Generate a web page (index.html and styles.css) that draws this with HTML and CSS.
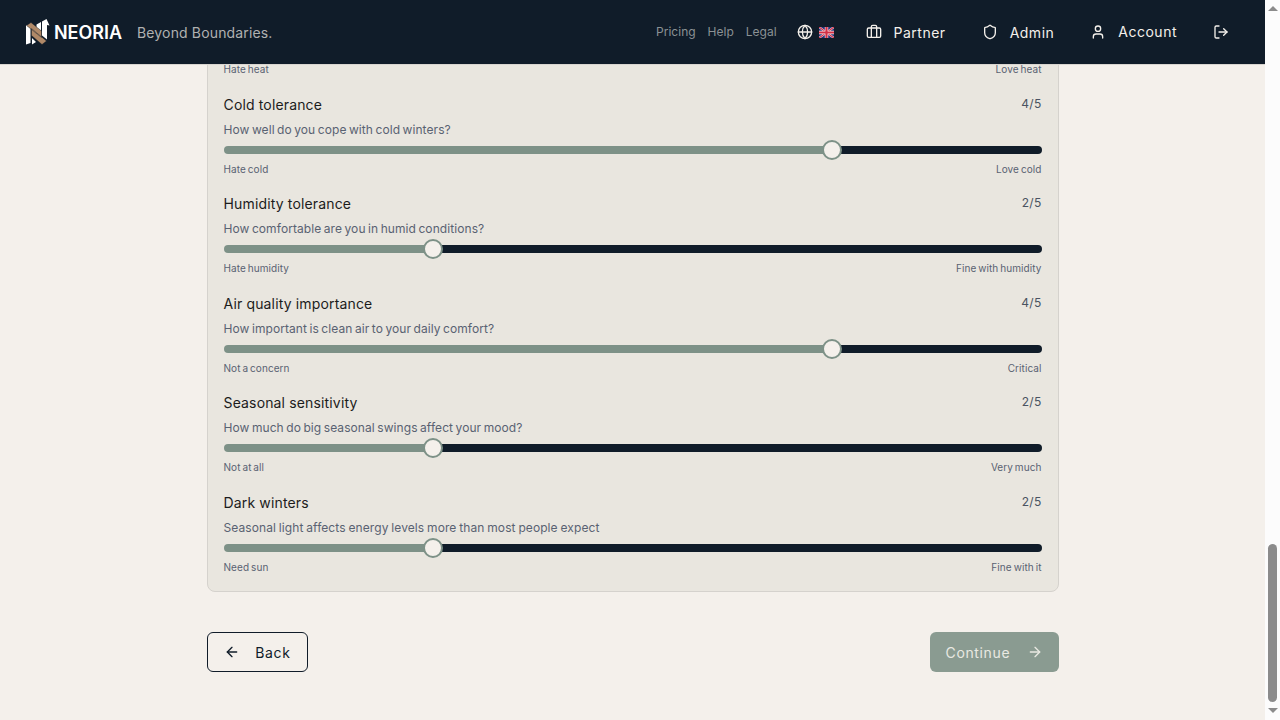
FILE: index.html
```
<!DOCTYPE html>
<html lang="en">
  <head>
    <meta charset="UTF-8" />
    <meta name="viewport" content="width=device-width, initial-scale=1.0" />
    <title>Neoria</title>
    <link rel="stylesheet" href="styles.css">
  </head>
  <body>
    <div class="page">
      <header class="navbar">
        <a class="brand" href="#">
          <svg class="brand-mark" viewBox="0 0 24 26">
            <path fill="#fff" d="M0 6l4.500 3v15L0 25.500zM6 19l4 4-4 2.500zM10.500 5.500L15 3v9l-4.500-3.500zM16 2.500L20.500 0l3 6.500-2.500-.5v14.500l-5-4z" />
            <path fill="#b08968" stroke="#101c29" stroke-width="0.4" d="M.5 6.500L5 3.500 15.500 12v6.500zM5.500 9.500L20.500 22l-4.500 3.500L5.500 16.500z" />
          </svg>
          <span class="brand-name">NEORIA</span>
        </a>
        <span class="tagline">Beyond Boundaries.</span>
        <nav class="links">
          <a href="#">Pricing</a>
          <a href="#">Help</a>
          <a href="#">Legal</a>
        </nav>
        <button class="language">
          <svg class="icon" viewBox="0 0 24 24"><circle cx="12" cy="12" r="10" /><path d="M12 2a14.5 14.5 0 0 0 0 20 14.5 14.5 0 0 0 0-20" /><path d="M2 12h20" /></svg>
          <svg class="flag" viewBox="0 0 15 11">
            <path fill="#29337a" d="M0 0h15v11H0z" />
            <path stroke="#f2eef0" stroke-width="2" d="M0 0l15 11M15 0L0 11" />
            <path stroke="#d32f45" stroke-width="1.2" d="M0 0l15 11M15 0L0 11" />
            <path stroke="#f2eef0" stroke-width="3.4" d="M7.5 0v11M0 5.5h15" />
            <path stroke="#d32f45" stroke-width="2.2" d="M7.5 0v11M0 5.5h15" />
          </svg>
        </button>
        <a href="#" class="nav-item partner">
          <svg class="icon" viewBox="0 0 24 24"><path d="M16 20V4a2 2 0 0 0-2-2h-4a2 2 0 0 0-2 2v16" /><rect width="20" height="14" x="2" y="6" rx="2" /></svg>
          <span>Partner</span>
        </a>
        <a href="#" class="nav-item admin">
          <svg class="icon" viewBox="0 0 24 24"><path d="M20 13c0 5-3.5 7.5-7.66 8.95a1 1 0 0 1-.67-.01C7.5 20.5 4 18 4 13V6a1 1 0 0 1 1-1c2 0 4.5-1.2 6.24-2.72a1.17 1.17 0 0 1 1.52 0C14.51 3.81 17 5 19 5a1 1 0 0 1 1 1z" /></svg>
          <span>Admin</span>
        </a>
        <a href="#" class="nav-item account">
          <svg class="icon" viewBox="0 0 24 24"><path d="M19 21v-2a4 4 0 0 0-4-4H9a4 4 0 0 0-4 4v2" /><circle cx="12" cy="7" r="4" /></svg>
          <span>Account</span>
        </a>
        <a href="#" class="logout">
          <svg class="icon" viewBox="0 0 24 24"><path d="M9 21H5a2 2 0 0 1-2-2V5a2 2 0 0 1 2-2h4" /><path d="m16 17 5-5-5-5" /><path d="M21 12H9" /></svg>
        </a>
      </header>

      <main class="content">
        <section class="card">
          <div class="question">
            <div class="scale"><span>Hate heat</span><span>Love heat</span></div>
          </div>
          <div class="question">
            <div class="question-head"><h3>Cold tolerance</h3><span class="score">4/5</span></div>
            <p>How well do you cope with cold winters?</p>
            <input type="range" min="1" max="5" value="4" style="--fill: 75%" />
            <div class="scale"><span>Hate cold</span><span>Love cold</span></div>
          </div>
          <div class="question">
            <div class="question-head"><h3>Humidity tolerance</h3><span class="score">2/5</span></div>
            <p>How comfortable are you in humid conditions?</p>
            <input type="range" min="1" max="5" value="2" style="--fill: 25%" />
            <div class="scale"><span>Hate humidity</span><span>Fine with humidity</span></div>
          </div>
          <div class="question">
            <div class="question-head"><h3>Air quality importance</h3><span class="score">4/5</span></div>
            <p>How important is clean air to your daily comfort?</p>
            <input type="range" min="1" max="5" value="4" style="--fill: 75%" />
            <div class="scale"><span>Not a concern</span><span>Critical</span></div>
          </div>
          <div class="question">
            <div class="question-head"><h3>Seasonal sensitivity</h3><span class="score">2/5</span></div>
            <p>How much do big seasonal swings affect your mood?</p>
            <input type="range" min="1" max="5" value="2" style="--fill: 25%" />
            <div class="scale"><span>Not at all</span><span>Very much</span></div>
          </div>
          <div class="question">
            <div class="question-head"><h3>Dark winters</h3><span class="score">2/5</span></div>
            <p class="hint-long">Seasonal light affects energy levels more than most people expect</p>
            <input type="range" min="1" max="5" value="2" style="--fill: 25%" />
            <div class="scale"><span>Need sun</span><span>Fine with it</span></div>
          </div>
        </section>
        <div class="actions">
          <button class="btn btn-back">
            <svg class="icon" viewBox="0 0 24 24"><path d="m12 19-7-7 7-7" /><path d="M19 12H5" /></svg>
            <span>Back</span>
          </button>
          <button class="btn btn-continue">
            <span>Continue</span>
            <svg class="icon" viewBox="0 0 24 24"><path d="M5 12h14" /><path d="m12 5 7 7-7 7" /></svg>
          </button>
        </div>
      </main>
    </div>
    <div class="scrollbar">
      <span class="arrow-up"></span>
      <span class="thumb"></span>
      <span class="arrow-down"></span>
    </div>
  </body>
</html>
```
FILE: styles.css
```
* {
  margin: 0;
  padding: 0;
  box-sizing: border-box;
}

body {
  display: flex;
  height: 100vh;
  overflow: hidden;
  background-color: #f4f0eb;
  color: #1c1c1c;
  font-family: Inter, "Open Sans", sans-serif;
}

a {
  color: inherit;
  text-decoration: none;
}

button {
  font-family: inherit;
  background: none;
  border: none;
}

.page {
  flex: 1;
  min-width: 0;
  display: flex;
  flex-direction: column;
}

.icon {
  width: 16px;
  height: 16px;
  flex-shrink: 0;
  fill: none;
  stroke: currentColor;
  stroke-width: 2;
  stroke-linecap: round;
  stroke-linejoin: round;
}

/* navbar */
.navbar {
  position: relative;
  z-index: 1;
  flex: 0 0 65px;
  display: flex;
  align-items: center;
  padding: 0 36px 0 26px;
  background-color: #101c29;
  border-bottom: 1px solid #d8d5d0;
  color: #f4f0eb;
  white-space: nowrap;
}

.brand {
  display: flex;
  align-items: center;
  width: 111px;
}

.brand-mark {
  width: 24px;
  height: 26px;
}

.brand-name {
  margin-left: 4px;
  font-size: 18px;
  font-weight: 600;
  letter-spacing: -0.05px;
  color: #fff;
}

.tagline {
  font-size: 14px;
  letter-spacing: 0.15px;
  color: #b0b1b1;
}

.links {
  display: flex;
  gap: 12px;
  margin-left: auto;
  margin-right: 20px;
  font-size: 12px;
  line-height: 17px;
  padding-bottom: 2px;
  color: #8b9194;
}

.language {
  display: flex;
  align-items: center;
  gap: 6px;
  color: inherit;
}

.flag {
  width: 15px;
  height: 11px;
}

.nav-item {
  display: flex;
  align-items: center;
  gap: 12px;
  font-size: 14px;
  font-weight: 400;
  letter-spacing: 0.5px;
}

.partner {
  margin-left: 32px;
}

.admin {
  margin-left: 36px;
}

.account {
  margin-left: 36px;
}

.account span {
  padding-bottom: 1px;
}

.logout {
  display: flex;
  margin-left: 36px;
}

/* questions */
.content {
  flex: 1;
  min-height: 0;
  display: flex;
  flex-direction: column;
  justify-content: flex-end;
  width: 852px;
  margin: 0 auto;
  padding-bottom: 48px;
}

.card {
  display: flex;
  flex-direction: column;
  gap: 16.3px;
  padding: 16px 16px 16.25px;
  background-color: #e9e6df;
  border: 1px solid #d5d2cd;
  border-radius: 8px;
}

.question-head {
  display: flex;
  justify-content: space-between;
  height: 21px;
  margin-bottom: 5px;
}

h3 {
  font-size: 14px;
  line-height: 21px;
  font-weight: 400;
  letter-spacing: 0.15px;
}

.score {
  font-size: 12px;
  line-height: 19px;
  font-weight: 400;
  letter-spacing: 0.3px;
  color: #4a5361;
}

.question p {
  font-size: 12px;
  line-height: 20px;
  letter-spacing: 0.08px;
  word-spacing: -1px;
  color: #596272;
}

.question .hint-long {
  word-spacing: -0.6px;
}

input[type="range"] {
  -webkit-appearance: none;
  appearance: none;
  display: block;
  width: 100%;
  height: 8px;
  margin: 6.2px 0 8px;
  border-radius: 4px;
  background: linear-gradient(to right, #7d9187 var(--fill), #101c29 var(--fill));
}

input[type="range"]::-webkit-slider-thumb {
  -webkit-appearance: none;
  width: 20px;
  height: 20px;
  border: 2px solid #7d9187;
  border-radius: 50%;
  background: #f4f0eb;
}

.scale {
  display: flex;
  justify-content: space-between;
  font-size: 10px;
  line-height: 15px;
  letter-spacing: 0.08px;
  word-spacing: -1px;
  color: #596272;
}

/* actions */
.actions {
  display: flex;
  justify-content: space-between;
  margin-top: 40px;
}

.btn {
  display: flex;
  align-items: center;
  justify-content: space-between;
  height: 40px;
  padding: 0 16px;
  border-radius: 6px;
  font-size: 14px;
  font-weight: 400;
  letter-spacing: 0.65px;
}

.btn-back {
  width: 101px;
  border: 1px solid #101c29;
  color: #101c29;
}

.btn-continue {
  width: 129px;
  background-color: #8a9b91;
  color: #e9e9e2;
}

/* scrollbar */
.scrollbar {
  display: flex;
  flex-direction: column;
  align-items: center;
  width: 15px;
  padding: 6px 0 7px;
  background-color: #fcfcfc;
}

.scrollbar .thumb {
  width: 9px;
  height: 158px;
  margin-top: auto;
  margin-bottom: 6px;
  border-radius: 5px;
  background-color: #8b8b8b;
}

.arrow-up,
.arrow-down {
  border-left: 5px solid transparent;
  border-right: 5px solid transparent;
}

.arrow-up {
  border-bottom: 5px solid #8b8b8b;
}

.arrow-down {
  border-top: 5px solid #8b8b8b;
}
```
